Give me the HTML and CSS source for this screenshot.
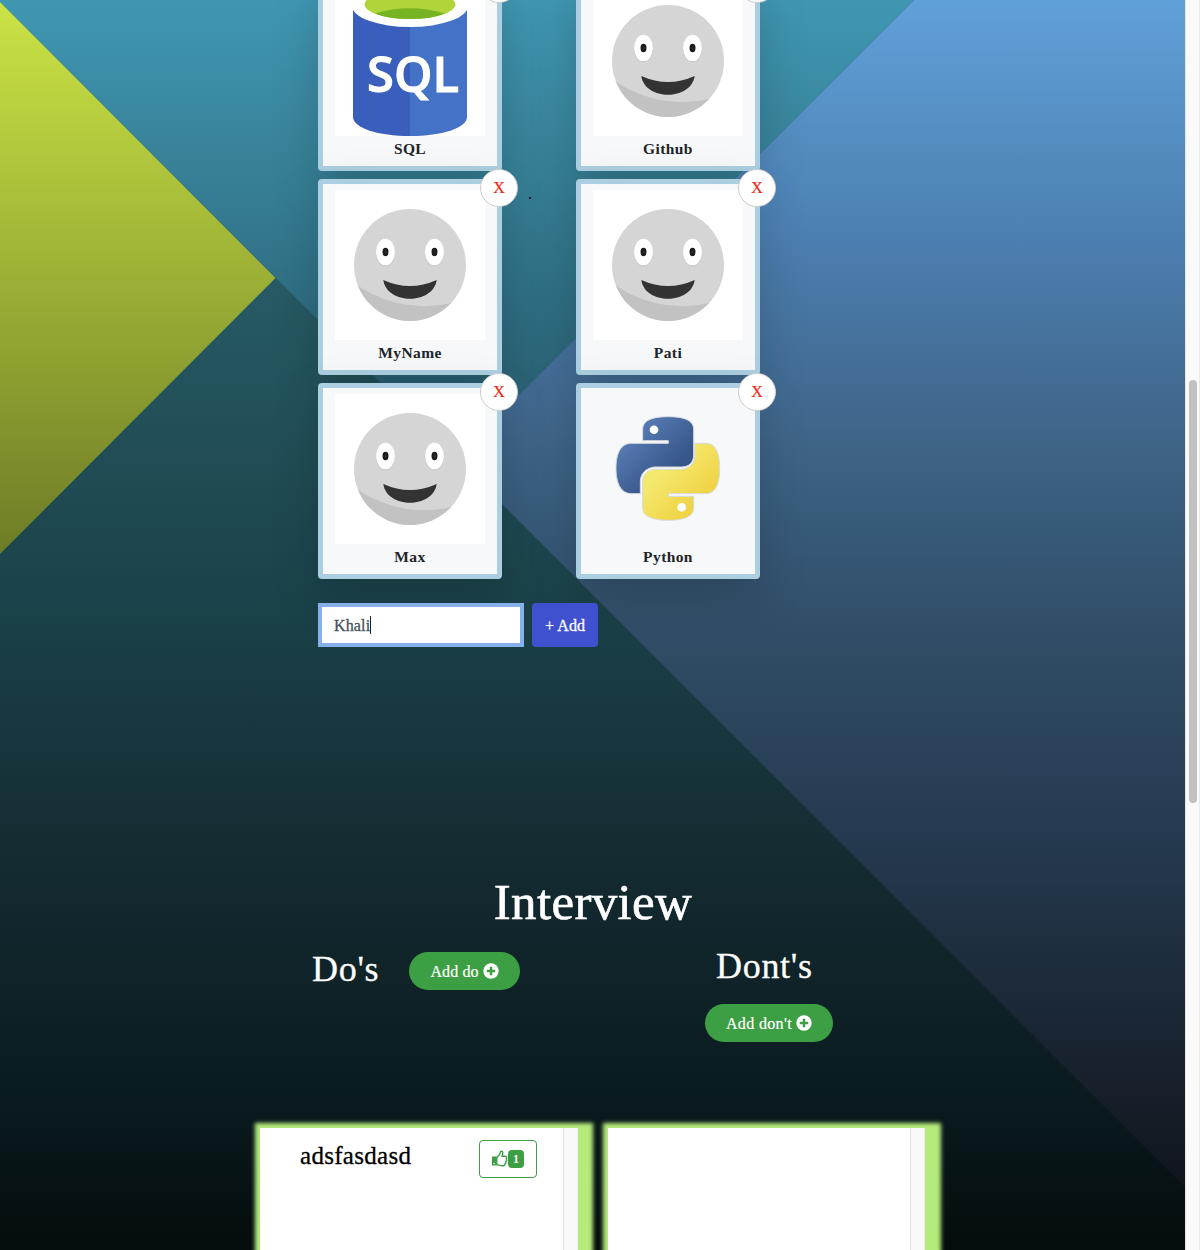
FILE: index.html
```html
<!DOCTYPE html>
<html lang="en">
<head>
<meta charset="utf-8">
<title>Interview</title>
<link rel="stylesheet" href="styles.css">
</head>
<body>
<svg class="defs" width="0" height="0" aria-hidden="true">
  <defs>
    <clipPath id="face-clip"><circle cx="75" cy="75" r="56"/></clipPath>
    <symbol id="face" viewBox="0 0 150 150">
      <rect width="150" height="150" fill="#fff"/>
      <circle cx="75" cy="75" r="56" fill="#d5d5d5"/>
      <path clip-path="url(#face-clip)" d="M15 91 Q25 97 35 103 Q76 123 116 113 L116 140 H15Z" fill="#c2c2c2"/>
      <ellipse cx="50.5" cy="63" rx="9.6" ry="13.6" fill="#c6c6c6"/>
      <ellipse cx="99.5" cy="63" rx="9.6" ry="13.6" fill="#c6c6c6"/>
      <ellipse cx="50.5" cy="62" rx="9.4" ry="13.3" fill="#fff"/>
      <ellipse cx="99.5" cy="62" rx="9.4" ry="13.3" fill="#fff"/>
      <ellipse cx="50.5" cy="62" rx="3" ry="4.2" fill="#1c1c1c"/>
      <ellipse cx="99.5" cy="62" rx="3" ry="4.2" fill="#1c1c1c"/>
      <circle cx="50.8" cy="62" r=".6" fill="#666"/>
      <circle cx="99.8" cy="62" r=".6" fill="#666"/>
      <path d="M48.3 90 Q75 102 101.7 90 C98 115 52 115 48.3 90Z" fill="#333"/>
    </symbol>
    <symbol id="plus" viewBox="0 0 16 16">
      <circle cx="8" cy="8" r="7.7" fill="#fff"/>
      <path d="M8 3.8V12.2M3.8 8H12.2" stroke="#3d9f44" stroke-width="2.5"/>
    </symbol>
  </defs>
</svg>
<div class="window">
  <main class="page">
    <svg class="backdrop" viewBox="0 0 1185 1250" aria-hidden="true">
      <defs>
        <linearGradient id="dark" gradientUnits="userSpaceOnUse" x1="0" y1="278" x2="0" y2="1250">
          <stop offset="0" stop-color="#275b65"/><stop offset=".33" stop-color="#1b424a"/>
          <stop offset=".59" stop-color="#142c32"/><stop offset=".85" stop-color="#0a1a1e"/><stop offset="1" stop-color="#040c0d"/>
        </linearGradient>
        <linearGradient id="teal" gradientUnits="userSpaceOnUse" x1="0" y1="0" x2="0" y2="458">
          <stop offset="0" stop-color="#4097b2"/><stop offset="1" stop-color="#27596a"/>
        </linearGradient>
        <linearGradient id="lime" gradientUnits="userSpaceOnUse" x1="0" y1="0" x2="0" y2="554">
          <stop offset="0" stop-color="#cbe445"/><stop offset="1" stop-color="#6e7c26"/>
        </linearGradient>
        <linearGradient id="blue" gradientUnits="userSpaceOnUse" x1="0" y1="0" x2="0" y2="1187">
          <stop offset="0" stop-color="#60a0d8"/><stop offset=".2" stop-color="#4c7fb1"/>
          <stop offset=".34" stop-color="#41698f"/><stop offset=".52" stop-color="#314f69"/>
          <stop offset=".72" stop-color="#24384d"/><stop offset="1" stop-color="#11151c"/>
        </linearGradient>
      </defs>
      <rect width="1185" height="1250" fill="url(#dark)"/>
      <path d="M0 0H914L456 458L0 2Z" fill="url(#teal)"/>
      <path d="M914 0H1185V1187L456 458Z" fill="url(#blue)"/>
      <path d="M0 2L275.500 278L0 554Z" fill="url(#lime)"/>
    </svg>

    <section class="skills">
      <div class="cards">
        <article class="card">
          <svg class="picture" viewBox="0 0 150 150">
            <rect width="150" height="150" fill="#fff"/>
            <path d="M18 21V131C18 142 43 150 75 150V21Z" fill="#3a5ebb"/>
            <path d="M75 21V150C107 150 132 142 132 131V21Z" fill="#4472c6"/>
            <ellipse cx="75" cy="20" rx="58" ry="21" fill="#fff"/>
            <ellipse cx="75" cy="18.500" rx="45.500" ry="14.500" fill="#b0d53a"/>
            <path d="M40 27.500Q75 17 110 27.500Q97 33 75 33Q53 33 40 27.500Z" fill="#77b424"/>
            <text class="sql-text" x="32" y="106" textLength="92" lengthAdjust="spacingAndGlyphs">SQL</text>
          </svg>
          <h5 class="name">SQL</h5><button class="remove" aria-label="Remove"></button>
        </article>
        <article class="card"><svg class="picture"><use href="#face"/></svg><h5 class="name">Github</h5><button class="remove" aria-label="Remove"></button></article>
        <article class="card"><svg class="picture"><use href="#face"/></svg><h5 class="name">MyName</h5><button class="remove">X</button></article>
        <article class="card"><svg class="picture"><use href="#face"/></svg><h5 class="name">Pati</h5><button class="remove">X</button></article>
        <article class="card"><svg class="picture"><use href="#face"/></svg><h5 class="name">Max</h5><button class="remove">X</button></article>
        <article class="card">
          <svg class="picture" viewBox="0 0 150 150">
            <defs>
              <linearGradient id="py-blue" x1="0" y1="0" x2="1" y2="1"><stop offset=".15" stop-color="#5a80b8"/><stop offset=".7" stop-color="#38568a"/></linearGradient>
              <linearGradient id="py-yellow" x1="0" y1="0" x2="1" y2="1"><stop offset=".3" stop-color="#f4e96f"/><stop offset=".75" stop-color="#f0d344"/></linearGradient>
            </defs>
            <g transform="translate(-33 -24) scale(.33333)" stroke="#d5dade" stroke-width="3">
              <path d="M325 212H248V178C248 151 276 140 325 140C373 140 401 151 401 178V255C401 278 386 291 364 291H285C258 293 241 311 241 335V371H215C182 371 168 340 168 295C168 250 182 220 215 220H325Z" fill="url(#py-blue)"/>
              <path d="M405 220H440C467 220 479 251 479 297C479 341 466 371 437 371H325V379H401V414C401 438 374 451 325 451C276 451 248 438 248 414V335C248 313 264 298 287 298H365C389 296 405 279 405 255Z" fill="url(#py-yellow)"/>
            </g>
            <circle cx="61" cy="35.700" r="4.300" fill="#fff"/><circle cx="88.700" cy="113.300" r="4.300" fill="#fff"/>
          </svg>
          <h5 class="name">Python</h5><button class="remove">X</button>
        </article>
      </div>
      <form class="add-form">
        <div class="field"><span class="value">Khali</span><span class="caret"></span></div>
        <button class="add" type="button">+ Add</button>
      </form>
    </section>

    <section class="interview">
      <h1>Interview</h1>
      <div class="headings">
        <div class="dos"><h2>Do's</h2><button class="pill">Add do <svg><use href="#plus"/></svg></button></div>
        <div class="donts"><h2>Dont's</h2><button class="pill pill-wide">Add don't <svg><use href="#plus"/></svg></button></div>
      </div>
      <div class="panels">
        <div class="panel">
          <div class="list">
            <span class="entry">adsfasdasd</span>
            <button class="vote">
              <svg viewBox="0 0 16 17"><path d="M0 6.500H4.500V15.500H0Z" fill="#3d9f44"/><circle cx="2.200" cy="13.500" r=".7" fill="#fff"/><path d="M4.800 7.500L7.500 4.500C8.300 3.500 7.900 1.200 9.200 1.200C11.200 1.200 11.200 3.300 10 6.300H13C15 6.300 15.200 8.300 14.200 9C15 9.700 14.700 11.200 13.800 11.500C14.300 12.500 13.800 13.500 13 13.700C13.200 15.300 12 15.700 10.300 15.700C8 15.700 6.500 14.700 4.800 14.700Z" fill="#fff" stroke="#3d9f44" stroke-width="1.400" stroke-linejoin="round"/></svg><span class="badge">1</span>
            </button>
          </div>
          <div class="track"></div>
        </div>
        <div class="panel"><div class="list"></div><div class="track"></div></div>
      </div>
    </section>
    <span class="dot"></span>
  </main>
  <aside class="scrollbar"><div class="thumb"></div></aside>
</div>
</body>
</html>
```
FILE: styles.css
```css
* { box-sizing: border-box; }
body { margin: 0; font-family: Baskerville, "Liberation Serif", serif; font-size: 16px; color: #212529; }
button { font: inherit; padding: 0; margin: 0; }
h1, h2, h5 { margin: 0; font-weight: 400; }
.defs { position: absolute; }
.window { display: flex; width: 1200px; height: 1250px; overflow: hidden; }
.page { position: relative; width: 1185px; height: 1250px; overflow: hidden; isolation: isolate; background: #030a0b; }
.backdrop { position: absolute; inset: 0; width: 1185px; height: 1250px; z-index: -1; }

.skills { margin-top: -25px; padding-left: 318px; }
.cards { display: grid; grid-template-columns: 184px 184px; gap: 8px 74px; }
.card {
  position: relative; height: 196px; padding-top: 6px;
  display: flex; flex-direction: column; align-items: center;
  background: #f7f8fa; border: 5px solid #abcfe0; border-radius: 4px;
  box-shadow: 0 16px 48px rgba(0, 0, 0, .175);
}
.picture { display: block; width: 150px; height: 150px; flex: none; }
.sql-text { font: 600 49px "Open Sans", sans-serif; fill: #fff; stroke: #fff; stroke-width: 1px; }
.name { font-size: 15.5px; line-height: 26px; font-weight: 700; letter-spacing: .4px; }
.remove {
  position: absolute; top: -15px; right: -21px; width: 38px; height: 38px;
  border: 1px solid #ccc; border-radius: 50%; background: #fff; color: #ec2a1c; line-height: 36px;
  -webkit-text-stroke: .2px #ec2a1c;
}

.add-form { position: relative; display: flex; gap: 8px; margin-top: 24px; }
.field {
  display: flex; align-items: center; width: 206px; height: 44px; padding-left: 12px;
  border: 4px solid #86b0ea;
  background: linear-gradient(#fff, #fff) padding-box;
  color: #495057; -webkit-text-stroke: .3px #495057; letter-spacing: .15px;
}
.value { margin-top: 1px; }
.caret { width: 1px; height: 18px; background: #222; }
.add { width: 66px; height: 44px; padding-top: 1px; border: 0; border-radius: 4px; background: #3f51cf; color: #fff; letter-spacing: .1px; -webkit-text-stroke: .3px #fff; }

.interview { margin-top: 224px; color: #fff; }
h1 { margin-top: -1px; padding-left: 1px; text-align: center; font-size: 51px; line-height: 64px; letter-spacing: .35px; -webkit-text-stroke: .6px #fff; }
.headings { display: flex; height: 194px; padding: 18px 0 0 312px; }
.interview h1 { position: relative; top: 0; }
h2 { font-size: 36px; line-height: 43px; letter-spacing: .7px; -webkit-text-stroke: .3px #fff; }
.dos { display: flex; align-items: flex-start; width: 393px; }
.dos h2 { width: 97px; margin-top: -4px; }
.donts h2 { margin: -7px 0 16px 11px; }
.pill {
  display: flex; align-items: center; justify-content: center; gap: 4px;
  width: 111px; height: 38px; border: 0; border-radius: 19px; background: #3d9f44; color: #fff; padding-top: 1px; letter-spacing: .1px;
  -webkit-text-stroke: .2px #fff;
}
.pill svg { width: 16px; height: 16px; margin-top: -2px; }
.pill-wide { width: 128px; letter-spacing: .35px; }

.panels { display: flex; gap: 20px; padding-left: 260px; }
.panel { display: flex; width: 328px; height: 180px; background: #b5eb7b; box-shadow: 0 0 4px 5px #b5eb7b; }
.list { display: flex; align-items: flex-start; width: 303px; background: #fff; }
.panel + .panel .list { width: 302px; }
.track { width: 15px; background: #f9f9f9; border-left: 1px solid #e2e2e2; border-right: 1px solid #eee; }
.entry { width: 179px; margin: 13px 0 0 40px; font-size: 25px; line-height: 30px; color: #000; letter-spacing: .3px; -webkit-text-stroke: .3px #000; }
.vote {
  display: flex; align-items: center; justify-content: center; width: 58px; height: 38px; margin-top: 12px;
  border: 1px solid #3d9f44; border-radius: 4px; background: #fff;
}
.vote svg { width: 16px; height: 17px; margin-top: -2px; }
.badge { width: 16px; height: 18px; border-radius: 4px; background: #3d9f44; color: #fff; font-size: 12px; font-weight: 700; line-height: 18px; }

.dot { position: absolute; left: 529px; top: 197px; width: 2px; height: 2px; border-radius: 50%; background: #000; }
.scrollbar { width: 15px; height: 1250px; padding: 380px 0 0 3px; background: #fafafa; border-left: 1px solid #e6e6e6; border-right: 1px solid #ebebeb; }
.thumb { width: 8px; height: 423px; border-radius: 4px; background: #c1c1c1; }
```
